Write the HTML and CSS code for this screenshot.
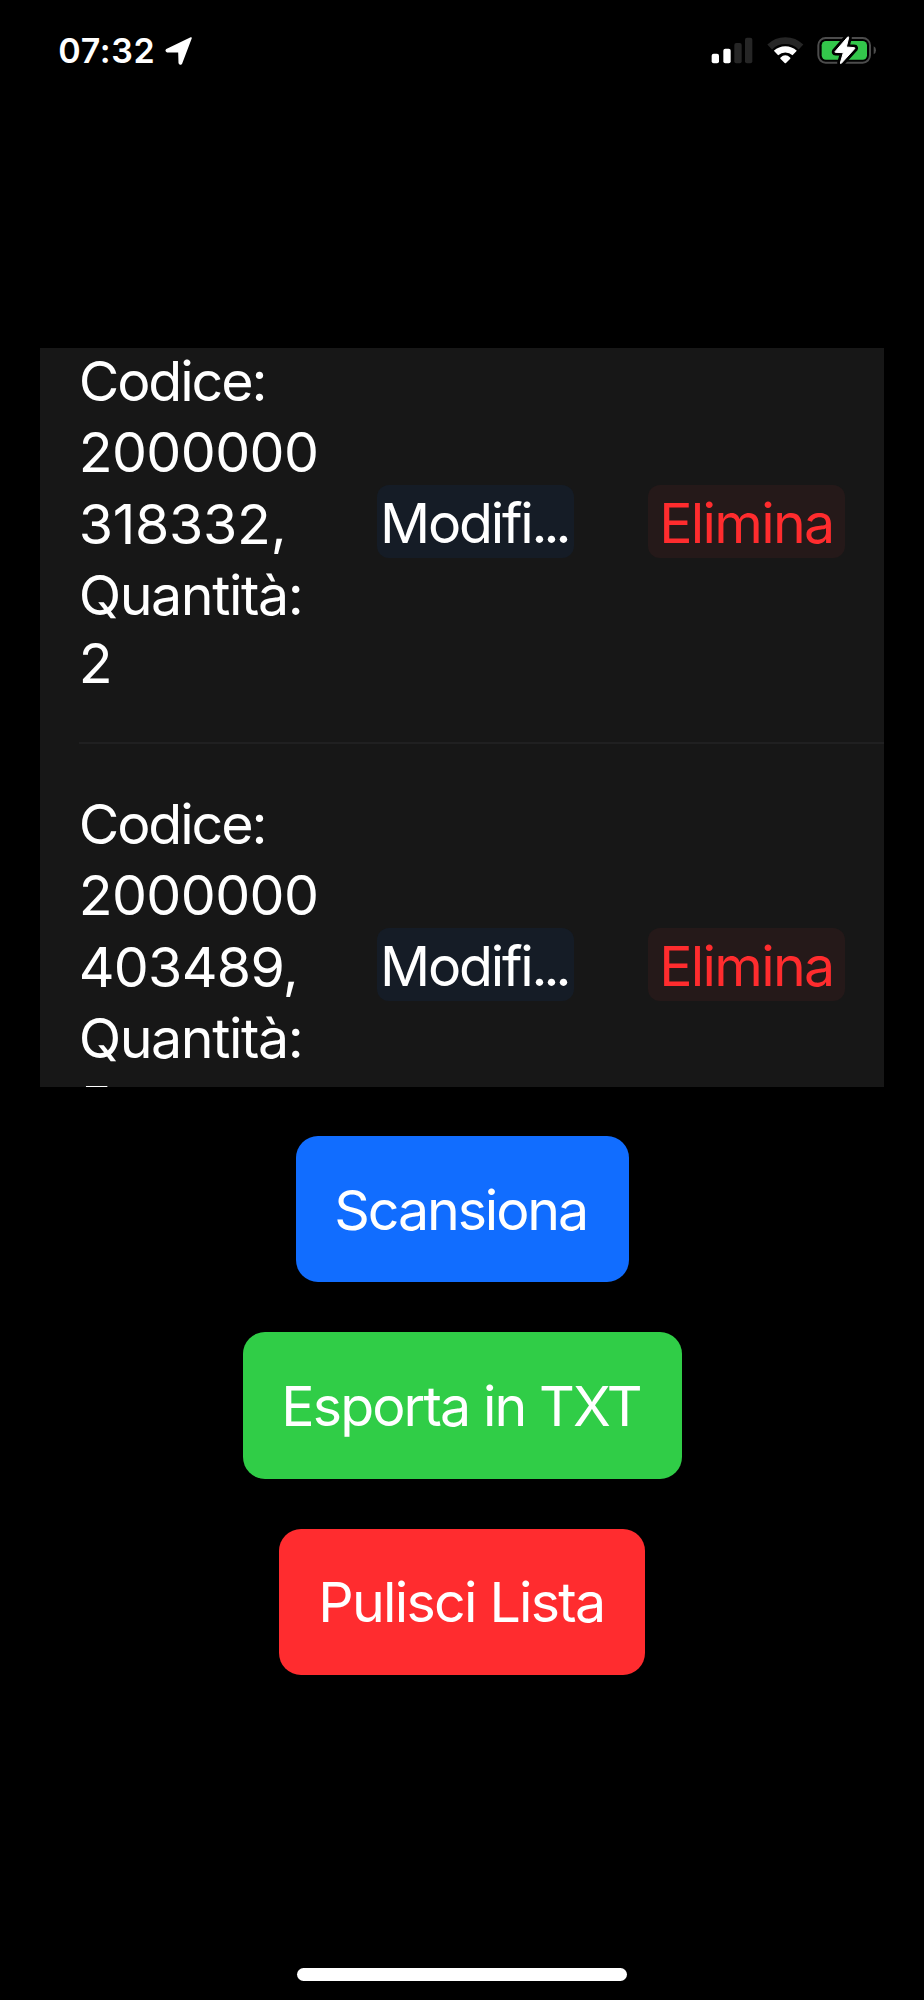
FILE: index.html
```html
<!DOCTYPE html>
<html lang="it">
<head>
<meta charset="utf-8">
<title>Lista codici</title>
<link rel="stylesheet" href="styles.css">
</head>
<body>
<div class="screen">
  <header class="status">
    <div class="status-left">
      <span class="time">07:32</span>
      <svg class="location" viewBox="0 0 90 90" aria-hidden="true">
        <path d="M81 9 L8 44 Q5 48 10 50 L45 50 L46 84 Q48 89 52 85 Z"/>
      </svg>
    </div>
    <svg class="indicators" viewBox="0 0 510 90" aria-hidden="true">
      <g class="on">
        <rect x="5" y="56" width="22" height="29" rx="6"/>
        <rect x="40" y="41" width="22" height="44" rx="6"/>
      </g>
      <g class="off">
        <rect x="73" y="24" width="22" height="61" rx="6"/>
        <rect x="105" y="8" width="22" height="77" rx="6"/>
      </g>
      <path class="wifi-off" d="M179 36 A67 67 0 0 1 273 36"/>
      <path class="wifi-on" d="M198 54 A41 41 0 0 1 254 54"/>
      <path class="on" d="M211 68 Q226 54 241 68 Q242 70 240 72 L228 84 Q226 86 224 84 L212 72 Q210 70 211 68 Z"/>
      <rect class="case" x="325" y="9" width="155" height="74" rx="22"/>
      <path class="nub" d="M491 34 Q498 37 498 46 Q498 55 491 58 Z"/>
      <rect class="charge" x="335" y="18" width="136" height="56" rx="13"/>
      <path class="bolt-edge" d="M413 6 L375 50 Q374 52 376 52 L400 53 L391 84 Q391 87 394 85 L434 41 Q436 38 433 38 L409 36 L416 8 Q416 4 413 6 Z"/>
      <path class="bolt" d="M413 6 L375 50 Q374 52 376 52 L400 53 L391 84 Q391 87 394 85 L434 41 Q436 38 433 38 L409 36 L416 8 Q416 4 413 6 Z"/>
    </svg>
  </header>

  <main class="content">
    <section class="list">
      <article class="row">
        <div class="info">
          <span class="line label">Codice:</span>
          <span class="line zeros">2000000</span>
          <span class="line code-a">318332,</span>
          <span class="line quantity">Quantità:</span>
          <span class="line last">2</span>
        </div>
        <button class="small edit"><span class="edit-word">Modifi</span><span class="dots">...</span></button>
        <button class="small delete">Elimina</button>
      </article>
      <hr class="divider">
      <article class="row">
        <div class="info">
          <span class="line label">Codice:</span>
          <span class="line zeros">2000000</span>
          <span class="line code-b">403489,</span>
          <span class="line quantity">Quantità:</span>
          <span class="line last">5</span>
        </div>
        <button class="small edit"><span class="edit-word">Modifi</span><span class="dots">...</span></button>
        <button class="small delete">Elimina</button>
      </article>
    </section>

    <nav class="actions">
      <button class="action scan">Scansiona</button>
      <button class="action export">Esporta in TXT</button>
      <button class="action clear">Pulisci Lista</button>
    </nav>
  </main>

  <div class="home-indicator"></div>
</div>
</body>
</html>
```
FILE: styles.css
```css
* { box-sizing: border-box; }

body {
  margin: 0;
  background: #000;
  color: #fff;
  font-family: Inter, "Liberation Sans", sans-serif;
  font-size: 55.5px;
}

button {
  border: 0;
  margin: 0;
  padding: 0;
  color: #fff;
  font: inherit;
  white-space: nowrap;
}

.screen {
  display: flex;
  flex-direction: column;
  width: 924px;
  height: 2000px;
  overflow: hidden;
}

/* Status bar */
.status {
  display: flex;
  justify-content: space-between;
  align-items: flex-start;
  height: 348px;
  padding: 35px 44px 0 58.3px;
}

.status-left { display: flex; }

.time {
  width: 106.2px;
  font-size: 34px;
  font-weight: 600;
  line-height: 32px;
  letter-spacing: 0.6px;
}

.location { width: 30px; height: 30px; fill: #fff; stroke: #fff; stroke-width: 5; stroke-linejoin: round; }
.indicators { width: 170px; height: 30px; overflow: visible; }
.on { fill: #fff; }
.off { fill: #262626; }
.wifi-off { fill: none; stroke: #262626; stroke-width: 20; }
.wifi-on { fill: none; stroke: #fff; stroke-width: 19; }
.case { fill: none; stroke: #4c4c4c; stroke-width: 6; }
.nub { fill: #4c4c4c; }
.charge { fill: #33c64b; }
.bolt-edge { fill: #000; stroke: #000; stroke-width: 19; stroke-linejoin: round; }
.bolt { fill: #fff; stroke: #fff; stroke-width: 3; stroke-linejoin: round; }

/* Scrolled list */
.content { flex: 1; }

.list {
  width: 844.8px;
  height: 739px;
  margin-left: 39.5px;
  overflow: hidden;
  background: #171717;
}

.row {
  display: flex;
  align-items: center;
  height: 441.4px;
  padding: 43.8px 39px 46.4px 39.2px;
}

.row:first-child { margin-top: -47.1px; margin-bottom: -0.3px; }

.info { width: 298.6px; height: 351.2px; }
.line { display: block; line-height: 71.4px; white-space: nowrap; }
.last { line-height: 65.6px; }
.label { letter-spacing: -2.1px; }
.zeros { letter-spacing: -0.6px; }
.code-a { letter-spacing: -0.27px; }
.code-b { letter-spacing: -0.72px; }
.quantity { letter-spacing: -1.42px; }

.divider {
  height: 2px;
  margin: 0 0 0 39.5px;
  border: 0;
  background: #202021;
}

.small {
  width: 196.7px;
  height: 73.6px;
  margin-top: 2px;
  border-radius: 12px;
  line-height: 75px;
}

.edit {
  margin-right: 74px;
  padding-left: 2.7px;
  background: #151c26;
  text-align: left;
}

.edit-word { letter-spacing: -2.2px; }
.dots { letter-spacing: -4px; }

.delete {
  background: #251919;
  color: #ff2c2e;
  letter-spacing: -1.71px;
}

/* Main actions */
.actions {
  display: flex;
  flex-direction: column;
  align-items: center;
  gap: 50px;
  padding-top: 49px;
}

.action {
  height: 146.4px;
  border-radius: 22px;
  text-align: left;
}

.scan { width: 333px; padding-left: 38.8px; background: #116dff; letter-spacing: -2.11px; }
.export { width: 439px; padding-left: 38.8px; background: #30cd47; letter-spacing: -1.9px; }
.clear { width: 366px; padding-left: 39.3px; background: #ff2c2f; letter-spacing: -1.76px; }

.home-indicator {
  align-self: center;
  width: 330px;
  height: 13px;
  margin-bottom: 19.5px;
  border-radius: 7px;
  background: #fff;
}
```
